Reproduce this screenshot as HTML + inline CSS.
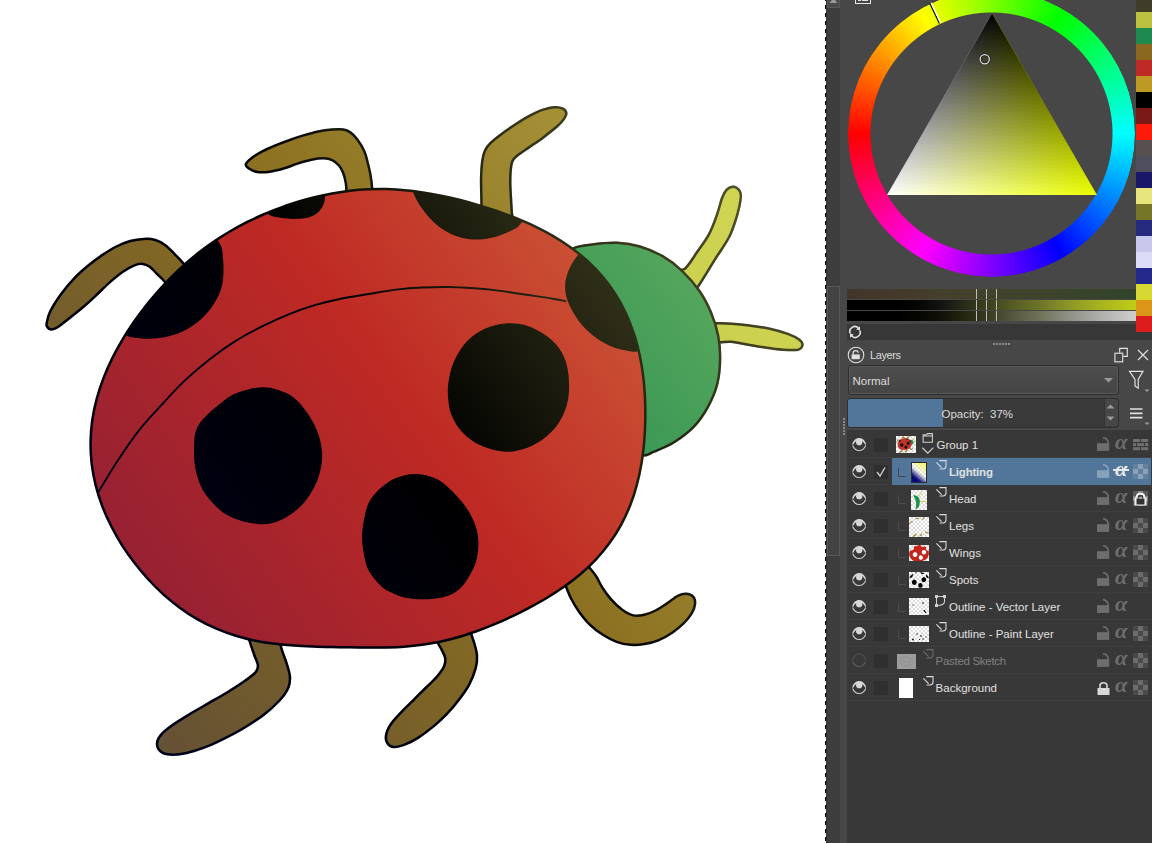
<!DOCTYPE html>
<html><head><meta charset="utf-8"><title>Krita</title>
<style>
*{box-sizing:border-box;margin:0;padding:0}
html,body{width:1152px;height:843px;overflow:hidden;background:#474747;font-family:"Liberation Sans",sans-serif;font-size:11.5px;color:#dcdcdc}
.abs{position:absolute}
#canvas{position:absolute;left:0;top:0;width:825px;height:843px;background:#fff;overflow:hidden}
#ants{position:absolute;left:825px;top:0;width:1.2px;height:843px;background:repeating-linear-gradient(180deg,#000 0,#000 1.5px,#fff 1.5px,#fff 5px,#000 5px,#000 8px)}
#sbar{position:absolute;left:826px;top:0;width:14px;height:843px;background:#3d3d3d;border-left:1px solid #383838}
#sbtn{position:absolute;left:827px;top:-6px;width:13px;height:14px;background:#4a4a4a;border:1px solid #595959}
#shandle{position:absolute;left:827px;top:286px;width:13px;height:270px;background:#434343;border:1px solid #585858}
#layers{position:absolute;left:847px;top:430px;width:305px;height:413px;background:#383838}
.row{position:absolute;left:0;width:305px;height:27px;border-bottom:1px solid #3e3e3e}
.row .t{position:absolute;top:7px;white-space:nowrap;line-height:14px}
.chk{position:absolute;left:27px;top:7px;width:14px;height:14px;background:#2f2f2f}
.sel{position:absolute;left:45px;top:0;width:259px;height:27px;background:#51769a}
.thumb{position:absolute;overflow:hidden}
.al{width:16px;height:18px;font:italic bold 21px/18px 'Liberation Serif',serif;transform:scaleX(1.08);transform-origin:0 0}
.cb{background-color:#fff;background-image:linear-gradient(45deg,#ddd 25%,transparent 25%,transparent 75%,#ddd 75%),linear-gradient(45deg,#ddd 25%,transparent 25%,transparent 75%,#ddd 75%);background-size:4px 4px;background-position:0 0,2px 2px}
</style></head>
<body>
<div id="canvas">
<svg id="bug" width="825" height="843" viewBox="0 0 825 843">
<defs>
<path id="body" d="M92.3,420.0C93.4,412.8 94.9,405.6 96.8,398.7C98.6,391.7 100.9,384.8 103.5,378.1C106.1,371.4 109.0,364.9 112.1,358.6C115.2,352.2 118.7,346.1 122.2,340.1C125.7,334.2 129.5,328.4 133.3,322.8C137.2,317.2 141.2,311.8 145.3,306.5C149.4,301.3 153.6,296.2 158.0,291.3C162.3,286.4 166.7,281.6 171.3,277.1C175.8,272.5 180.5,268.1 185.2,263.9C190.0,259.7 194.9,255.7 199.8,251.8C204.8,248.0 209.8,244.3 215.0,240.8C220.1,237.4 225.4,234.1 230.7,231.0C236.0,227.9 241.4,225.0 246.8,222.2C252.2,219.5 257.8,216.9 263.3,214.5C268.8,212.1 274.5,209.9 280.1,207.8C285.7,205.7 291.4,203.8 297.2,202.0C302.9,200.2 308.7,198.6 314.5,197.2C320.3,195.8 326.2,194.5 332.1,193.4C338.0,192.4 344.0,191.5 350.0,190.8C355.9,190.1 362.0,189.6 368.0,189.3C374.0,189.1 380.1,189.0 386.2,189.1C392.2,189.3 398.3,189.6 404.4,190.2C410.5,190.7 416.6,191.5 422.6,192.4C428.7,193.3 434.8,194.4 440.9,195.7C447.0,196.9 453.1,198.3 459.2,199.8C465.3,201.4 471.4,203.1 477.6,204.9C483.8,206.7 490.0,208.7 496.2,210.8C502.4,213.0 508.7,215.2 514.9,217.7C521.2,220.3 527.5,222.9 533.8,225.9C540.0,228.9 546.3,232.1 552.4,235.6C558.5,239.2 564.5,243.0 570.4,247.2C576.2,251.4 581.9,255.9 587.2,260.7C592.5,265.6 597.7,270.9 602.3,276.4C607.0,281.9 611.4,287.8 615.3,294.0C619.3,300.1 622.8,306.6 625.9,313.2C629.0,319.8 631.6,326.7 633.9,333.6C636.2,340.5 638.0,347.7 639.6,354.8C641.1,361.9 642.3,369.2 643.2,376.4C644.1,383.7 644.6,390.9 645.0,398.2C645.3,405.5 645.4,412.7 645.3,420.0C645.2,427.3 644.8,434.5 644.2,441.7C643.6,449.0 642.7,456.2 641.5,463.3C640.3,470.5 638.8,477.6 636.9,484.6C635.1,491.5 632.9,498.5 630.2,505.2C627.6,511.9 624.5,518.5 621.1,524.8C617.6,531.1 613.8,537.3 609.5,543.1C605.3,548.9 600.7,554.4 595.8,559.6C590.9,564.8 585.7,569.7 580.3,574.3C575.0,578.8 569.3,583.1 563.6,587.1C557.9,591.1 552.1,594.8 546.3,598.3C540.4,601.8 534.5,605.0 528.6,608.1C522.8,611.2 516.9,614.1 511.0,616.8C505.1,619.6 499.3,622.2 493.4,624.6C487.5,627.1 481.6,629.4 475.7,631.5C469.8,633.5 463.9,635.5 458.0,637.2C452.0,638.9 446.0,640.4 440.0,641.7C434.0,642.9 428.0,644.0 422.0,644.8C415.9,645.6 409.9,646.2 403.9,646.7C397.9,647.1 391.9,647.3 385.9,647.5C379.9,647.6 374.0,647.6 368.0,647.6C362.0,647.5 356.1,647.4 350.1,647.3C344.1,647.2 338.1,647.1 332.1,646.9C326.0,646.8 319.9,646.7 313.6,646.4C307.4,646.2 301.1,646.0 294.7,645.5C288.3,645.1 281.8,644.6 275.3,643.8C268.8,643.0 262.1,642.0 255.5,640.7C249.0,639.4 242.3,637.8 235.8,635.8C229.2,633.8 222.7,631.4 216.4,628.7C210.0,626.0 203.7,622.9 197.7,619.4C191.6,615.9 185.7,612.1 180.1,607.9C174.4,603.8 168.9,599.3 163.6,594.6C158.3,589.8 153.3,584.8 148.4,579.5C143.6,574.3 139.0,568.8 134.6,563.1C130.2,557.3 126.0,551.4 122.1,545.3C118.2,539.2 114.6,532.8 111.3,526.3C108.0,519.8 104.9,513.1 102.3,506.3C99.8,499.5 97.5,492.5 95.7,485.4C94.0,478.3 92.6,471.0 91.7,463.8C90.9,456.5 90.5,449.1 90.6,441.8C90.7,434.5 91.3,427.2 92.3,420.0Z"/>
<path id="head" d="M560.0,262.0C555.5,250.1 567.1,251.5 572.8,248.5C578.5,245.5 586.8,245.1 594.2,244.2C601.6,243.2 609.4,242.4 617.0,242.8C624.6,243.2 632.2,244.3 639.8,246.5C647.4,248.7 655.5,252.1 662.6,256.2C669.7,260.3 676.3,265.4 682.5,271.3C688.7,277.2 694.9,284.4 699.6,291.3C704.4,298.2 707.9,305.2 711.0,312.6C714.1,320.0 716.6,327.8 718.1,335.4C719.6,343.0 720.2,350.1 720.1,358.2C720.0,366.3 719.3,375.7 717.3,383.8C715.3,391.9 712.0,399.5 708.1,406.6C704.2,413.7 699.6,420.7 693.9,426.6C688.2,432.6 680.6,438.1 674.0,442.3C667.4,446.5 659.3,449.5 654.0,451.7C648.7,453.9 646.9,455.9 642.1,455.6C637.3,455.3 630.4,459.3 625.0,450.0C619.6,440.7 614.2,421.7 610.0,400.0C605.8,378.3 608.3,343.0 600.0,320.0C591.7,297.0 564.5,273.9 560.0,262.0Z"/>
<path id="ant1" d="M675.0,272.0C674.2,267.4 681.4,272.0 685.1,268.6C688.9,265.2 693.5,257.2 697.5,251.6C701.5,245.9 705.6,240.7 708.8,234.7C712.0,228.7 714.5,221.8 716.7,215.6C719.0,209.4 720.6,201.8 722.3,197.5C724.0,193.2 725.0,191.5 726.8,189.7C728.6,187.9 731.1,186.6 733.2,186.7C735.3,186.8 737.9,188.5 739.2,190.3C740.5,192.1 741.2,193.3 740.8,197.5C740.4,201.7 739.0,209.0 737.0,215.6C735.0,222.2 732.7,229.9 729.1,237.0C725.5,244.1 720.7,250.3 715.6,258.4C710.5,266.5 703.0,279.2 698.7,285.5C694.4,291.8 694.0,298.2 690.0,296.0C686.0,293.8 675.8,276.6 675.0,272.0Z"/>
<path id="ant2" d="M705.0,323.0C707.0,319.7 712.3,323.2 716.7,323.3C721.1,323.4 726.0,323.4 731.4,323.8C736.8,324.2 743.0,324.8 749.4,325.6C755.8,326.4 763.3,327.3 769.7,328.7C776.1,330.1 782.8,332.1 787.7,333.9C792.6,335.7 796.5,337.7 799.0,339.6C801.5,341.5 802.6,343.5 802.4,345.2C802.2,346.9 801.1,348.9 797.9,349.7C794.7,350.4 788.7,350.1 783.2,349.7C777.8,349.3 771.2,348.4 765.2,347.5C759.2,346.6 752.7,345.4 747.1,344.5C741.5,343.6 735.9,342.2 731.4,341.8C726.9,341.4 724.5,342.1 720.1,342.3C715.7,342.5 707.5,346.2 705.0,343.0C702.5,339.8 703.0,326.3 705.0,323.0Z"/>
<path id="leg1" d="M46.9,322.2C47.5,319.6 48.1,315.6 50.4,311.0C52.7,306.4 56.8,299.9 60.8,294.4C64.8,288.9 70.1,282.6 74.7,277.8C79.3,273.0 84.0,269.1 88.6,265.3C93.2,261.5 97.9,258.0 102.5,254.9C107.1,251.8 111.8,248.8 116.4,246.5C121.0,244.2 125.7,242.3 130.3,241.0C134.9,239.7 140.0,239.1 144.2,238.9C148.4,238.7 151.8,239.0 155.3,240.0C158.8,241.0 161.5,242.5 165.0,245.1C168.5,247.7 172.9,252.3 176.1,255.6C179.3,258.9 180.4,260.0 184.4,264.6C188.4,269.2 200.7,277.1 200.0,283.0C199.3,288.9 185.8,300.2 180.0,300.0C174.2,299.8 168.9,286.4 165.0,282.0C161.1,277.6 159.2,276.2 156.7,273.6C154.1,271.1 152.0,268.3 149.7,266.7C147.4,265.1 145.4,264.1 142.8,263.9C140.2,263.7 137.7,264.0 134.4,265.3C131.2,266.6 127.5,268.6 123.3,271.5C119.1,274.4 114.0,278.6 109.4,282.6C104.8,286.7 100.2,291.5 95.6,295.8C91.0,300.1 86.3,304.4 81.7,308.3C77.1,312.2 71.8,316.3 67.8,319.4C63.8,322.5 60.8,325.3 58.0,327.0C55.2,328.7 53.0,329.5 51.1,329.4C49.2,329.3 47.6,327.6 46.9,326.4C46.2,325.2 46.3,324.8 46.9,322.2Z"/>
<path id="leg2" d="M245.8,164.3C246.3,162.6 248.9,160.2 251.7,158.0C254.5,155.8 258.6,153.3 262.8,151.1C267.0,148.9 272.1,146.8 276.7,144.9C281.3,143.0 286.0,141.3 290.6,139.7C295.2,138.1 299.8,136.5 304.4,135.1C309.0,133.7 313.7,132.3 318.3,131.4C322.9,130.5 328.0,129.9 332.2,129.6C336.4,129.3 340.3,129.1 343.3,129.6C346.3,130.1 348.0,130.8 350.3,132.4C352.6,134.0 354.9,136.2 357.2,139.3C359.5,142.4 362.3,146.8 364.2,151.1C366.1,155.4 367.1,160.4 368.3,165.0C369.5,169.6 370.5,174.7 371.1,178.9C371.8,183.1 371.9,185.7 372.2,190.0C372.5,194.3 377.2,202.5 373.0,205.0C368.8,207.5 351.4,207.3 347.0,205.0C342.6,202.7 346.7,195.1 346.5,191.4C346.3,187.8 346.3,186.1 345.8,183.1C345.3,180.1 344.4,176.2 343.3,173.3C342.2,170.4 341.1,167.9 339.2,165.7C337.3,163.5 334.8,161.3 332.2,160.1C329.6,158.9 327.4,158.4 323.9,158.3C320.4,158.2 315.8,158.8 311.4,159.7C307.0,160.6 302.1,162.1 297.5,163.6C292.9,165.1 288.2,167.2 283.6,168.5C279.0,169.8 274.1,171.1 269.7,171.7C265.3,172.3 260.7,172.4 257.2,171.9C253.7,171.4 250.8,169.8 248.9,168.5C247.0,167.2 245.3,166.1 245.8,164.3Z"/>
<path id="leg3" d="M481.7,225.0C476.6,220.6 481.6,211.1 481.5,203.3C481.4,195.5 481.0,185.2 481.1,178.3C481.2,171.4 481.6,166.3 482.2,161.7C482.8,157.1 483.6,153.7 485.0,150.6C486.4,147.5 487.8,145.7 490.6,142.9C493.4,140.1 497.5,137.0 501.7,133.9C505.9,130.8 511.0,127.2 515.6,124.2C520.2,121.2 524.8,118.2 529.4,115.8C534.0,113.4 539.1,111.0 543.3,109.6C547.5,108.2 551.1,107.4 554.4,107.2C557.6,107.0 560.8,107.6 562.8,108.6C564.8,109.6 566.1,111.4 566.3,113.1C566.5,114.8 565.7,116.4 564.2,118.6C562.7,120.8 560.7,123.2 557.2,126.3C553.7,129.4 547.9,133.9 543.3,137.4C538.7,140.9 533.6,144.2 529.4,147.1C525.2,150.0 521.1,152.5 518.3,154.7C515.5,156.9 514.1,157.8 512.8,160.3C511.5,162.9 511.1,165.8 510.7,170.0C510.3,174.2 510.2,180.2 510.3,185.3C510.4,190.4 510.9,196.2 511.1,200.6C511.3,205.0 511.6,207.1 511.7,212.0C511.8,216.9 517.0,227.8 512.0,230.0C507.0,232.2 486.8,229.4 481.7,225.0Z"/>
<path id="leg4" d="M575.0,550.0C580.2,549.8 582.9,559.7 586.4,564.0C589.9,568.3 593.1,571.8 595.8,575.8C598.5,579.8 600.2,584.4 602.8,588.3C605.3,592.2 607.9,595.8 611.1,599.4C614.3,603.0 618.5,607.1 622.2,609.8C625.9,612.5 629.6,614.6 633.3,615.4C637.0,616.2 640.7,615.5 644.4,614.7C648.1,613.9 651.9,612.4 655.6,610.5C659.3,608.6 663.0,606.0 666.7,603.6C670.4,601.2 674.6,597.5 677.8,595.9C681.0,594.3 683.5,593.7 686.1,593.8C688.7,593.9 691.6,595.0 693.1,596.6C694.6,598.2 695.3,600.8 695.1,603.6C694.9,606.4 693.7,609.9 691.7,613.3C689.7,616.6 686.5,620.5 683.3,623.7C680.0,626.9 676.4,629.9 672.2,632.7C668.0,635.5 662.9,638.5 658.3,640.4C653.7,642.3 649.0,643.4 644.4,644.1C639.8,644.8 635.2,645.2 630.6,644.8C626.0,644.4 621.3,643.5 616.7,641.8C612.1,640.1 607.2,637.6 602.8,634.8C598.4,632.0 594.2,628.9 590.3,625.1C586.4,621.3 582.5,616.4 579.2,611.9C576.0,607.4 573.2,602.8 570.8,598.0C568.4,593.2 567.2,588.9 564.6,583.4C562.0,577.9 553.3,570.6 555.0,565.0C556.7,559.4 569.8,550.2 575.0,550.0Z"/>
<path id="leg5" d="M430.0,625.0C424.8,628.5 434.9,636.7 436.9,641.0C438.9,645.3 440.7,647.7 442.1,650.6C443.5,653.5 445.0,655.9 445.3,658.6C445.6,661.3 445.3,663.7 444.0,666.6C442.7,669.5 440.3,672.7 437.3,676.2C434.3,679.7 430.1,683.5 426.1,687.5C422.1,691.5 417.5,696.0 413.2,700.3C408.9,704.6 404.1,709.1 400.4,713.1C396.7,717.1 393.2,720.6 390.8,724.3C388.4,728.0 386.5,732.3 386.0,735.5C385.5,738.7 386.3,741.6 387.6,743.5C388.9,745.4 391.1,746.9 394.0,747.0C396.9,747.1 401.2,745.8 405.2,744.3C409.2,742.8 413.2,741.0 418.0,737.9C422.8,734.8 429.3,729.9 434.1,725.9C438.9,721.9 442.6,718.4 446.9,713.9C451.2,709.4 456.0,703.6 459.7,698.7C463.4,693.8 466.6,689.4 469.3,684.3C472.0,679.2 474.4,673.0 475.7,668.2C477.0,663.4 477.3,659.7 477.0,655.4C476.7,651.1 475.1,646.2 474.1,642.6C473.1,639.0 472.2,637.6 471.2,633.8C470.2,630.0 474.9,621.5 468.0,620.0C461.1,618.5 435.2,621.5 430.0,625.0Z"/>
<path id="leg6" d="M246.0,628.0C241.5,630.0 248.6,637.7 249.9,642.0C251.2,646.3 252.6,650.1 253.9,654.0C255.2,657.9 257.6,662.1 257.9,665.2C258.2,668.3 257.8,669.7 255.5,672.4C253.2,675.1 248.8,678.1 244.3,681.3C239.8,684.5 234.2,688.1 228.3,691.7C222.4,695.3 215.5,699.2 209.1,702.9C202.7,706.6 196.0,710.4 189.8,714.1C183.7,717.8 177.0,721.8 172.2,725.3C167.4,728.8 163.5,731.8 161.0,734.9C158.5,738.0 157.0,740.9 157.0,743.7C157.0,746.5 158.7,749.9 161.0,751.7C163.3,753.5 166.3,754.4 170.6,754.6C174.9,754.8 180.7,754.3 186.6,753.0C192.5,751.7 199.5,749.4 205.9,746.9C212.3,744.4 218.7,741.3 225.1,738.1C231.5,734.9 237.9,731.6 244.3,727.7C250.7,723.8 257.6,719.4 263.5,714.9C269.4,710.4 275.4,705.0 279.5,700.5C283.6,696.0 286.6,691.7 288.3,687.7C290.0,683.7 290.2,680.4 289.9,676.4C289.6,672.4 287.9,667.6 286.7,663.6C285.5,659.6 283.7,655.3 282.7,652.4C281.7,649.5 281.8,649.7 280.8,646.0C279.9,642.3 282.8,633.0 277.0,630.0C271.2,627.0 250.5,626.0 246.0,628.0Z"/>
<g id="spotsg"><path d="M218.3,241.3C223.0,247.7 222.3,251.1 223.0,258.3C223.7,265.5 223.9,276.6 222.2,284.4C220.5,292.2 217.1,298.9 213.0,305.2C208.9,311.5 203.5,317.4 197.4,322.2C191.3,327.0 183.9,331.2 176.5,333.9C169.1,336.6 159.7,338.0 153.0,338.6C146.3,339.2 140.5,338.4 136.1,337.8C131.7,337.2 131.6,338.2 126.4,335.2C121.2,332.2 106.9,330.9 105.0,320.0C103.1,309.1 106.7,285.0 115.0,270.0C123.3,255.0 141.7,238.3 155.0,230.0C168.3,221.7 184.4,218.1 195.0,220.0C205.6,221.9 213.6,234.9 218.3,241.3Z"/><path d="M268.3,214.3C271.8,216.8 276.6,217.0 280.8,217.8C285.0,218.6 289.1,218.9 293.3,218.9C297.5,218.9 302.1,218.9 305.8,218.1C309.5,217.3 312.8,216.2 315.6,214.3C318.4,212.4 320.9,209.5 322.5,206.7C324.1,203.9 324.8,201.5 325.0,197.6C325.2,193.7 329.8,184.9 324.0,183.0C318.2,181.1 300.7,182.7 290.0,186.0C279.3,189.3 263.6,198.3 260.0,203.0C256.4,207.7 264.8,211.8 268.3,214.3Z"/><path d="M413.0,191.7C414.7,196.8 418.1,203.0 422.2,208.7C426.3,214.4 432.1,221.1 437.8,225.7C443.5,230.3 450.0,233.8 456.1,236.1C462.2,238.4 467.9,239.4 474.4,239.5C480.9,239.6 488.7,238.6 495.2,236.9C501.7,235.2 509.1,231.9 513.5,229.6C517.9,227.3 517.7,227.1 521.3,223.0C524.9,218.9 538.5,211.3 535.0,205.0C531.5,198.7 514.2,190.5 500.0,185.0C485.8,179.5 464.7,173.2 450.0,172.0C435.3,170.8 418.2,174.7 412.0,178.0C405.8,181.3 411.3,186.6 413.0,191.7Z"/><path d="M577.4,255.7C573.4,260.6 570.3,266.1 568.3,271.3C566.2,276.5 565.1,281.8 565.1,287.0C565.1,292.2 566.0,297.0 568.3,302.6C570.6,308.2 574.4,315.2 578.7,320.9C583.0,326.5 588.6,332.1 594.3,336.5C599.9,340.9 606.9,344.6 612.6,347.0C618.3,349.4 624.0,350.2 628.3,350.9C632.6,351.5 633.2,352.4 638.2,350.9C643.2,349.4 655.2,350.5 658.0,342.0C660.8,333.5 660.5,314.0 655.0,300.0C649.5,286.0 635.5,267.7 625.0,258.0C614.5,248.3 599.9,242.4 592.0,242.0C584.1,241.6 581.4,250.8 577.4,255.7Z"/><path d="M448.3,400.0C447.7,394.7 447.4,389.7 448.3,383.5C449.2,377.3 450.5,369.6 453.5,362.6C456.5,355.6 461.3,347.4 466.5,341.7C471.7,336.0 478.3,331.7 484.8,328.7C491.3,325.7 498.8,324.0 505.7,323.5C512.6,323.0 519.5,323.4 526.5,325.6C533.5,327.8 541.5,332.1 547.4,336.5C553.3,340.9 558.2,346.1 561.7,352.2C565.2,358.3 567.2,365.0 568.3,373.0C569.3,381.0 569.5,391.9 568.0,400.0C566.5,408.1 563.3,415.4 559.6,421.6C555.9,427.8 551.2,432.6 545.8,437.0C540.4,441.4 534.0,445.3 527.3,447.8C520.6,450.3 513.4,452.2 505.7,451.8C498.0,451.4 488.2,448.8 481.0,445.6C473.8,442.4 467.4,437.4 462.5,432.4C457.6,427.4 454.1,420.8 451.7,415.4C449.3,410.0 448.9,405.3 448.3,400.0Z"/><path d="M260.0,387.4C266.1,387.2 272.2,387.9 278.3,390.0C284.4,392.1 290.5,394.2 296.5,400.0C302.5,405.8 310.1,416.0 314.4,424.7C318.7,433.4 321.6,443.1 322.1,452.4C322.6,461.6 320.8,471.5 317.4,480.2C314.0,488.9 308.2,498.1 302.0,504.8C295.8,511.5 287.8,517.1 280.4,520.3C272.9,523.5 266.0,524.8 257.3,524.0C248.6,523.2 236.5,520.3 228.0,515.6C219.5,510.9 211.6,502.5 206.4,495.6C201.2,488.7 198.7,481.7 196.6,474.0C194.5,466.3 193.8,457.5 194.1,449.3C194.4,441.1 193.6,432.9 198.7,424.7C203.8,416.5 217.6,405.6 224.8,400.0C232.0,394.4 235.8,393.4 241.7,391.3C247.6,389.2 253.9,387.6 260.0,387.4Z"/><path d="M416.3,474.0C423.5,474.2 431.1,476.0 437.8,479.6C444.5,483.2 450.9,489.9 456.3,495.6C461.7,501.4 466.6,507.4 470.2,514.1C473.8,520.8 476.9,528.0 477.9,535.7C478.9,543.4 478.4,552.6 476.4,560.3C474.3,568.0 469.7,576.2 465.6,581.9C461.5,587.6 457.4,591.5 451.7,594.3C446.0,597.1 439.1,598.3 431.7,598.9C424.2,599.5 414.2,599.3 407.0,598.0C399.8,596.7 393.0,593.4 388.5,591.2C384.0,589.0 383.1,588.1 380.0,585.0C376.9,581.9 372.5,576.8 370.0,572.7C367.5,568.6 366.5,566.5 365.2,560.3C363.9,554.1 361.8,544.4 362.1,535.7C362.4,527.0 364.5,515.1 366.8,507.9C369.1,500.7 371.6,497.4 376.2,492.5C380.8,487.6 388.0,481.7 394.7,478.6C401.4,475.5 409.1,473.8 416.3,474.0Z"/></g>
<g id="legsg"><use href="#leg1"/><use href="#leg2"/><use href="#leg3"/><use href="#leg4"/><use href="#leg5"/><use href="#leg6"/></g>
<clipPath id="cb"><use href="#body"/></clipPath>
<mask id="mall" maskUnits="userSpaceOnUse" x="0" y="0" width="825" height="843"><g fill="#fff" stroke="#fff" stroke-width="2.5"><use href="#body"/><use href="#head"/><use href="#ant1"/><use href="#ant2"/><use href="#leg1"/><use href="#leg2"/><use href="#leg3"/><use href="#leg4"/><use href="#leg5"/><use href="#leg6"/></g></mask>
<linearGradient id="lg" gradientUnits="userSpaceOnUse" x1="-103.7" y1="646.9" x2="723.3" y2="44.5"><stop offset="0" stop-color="#00006b"/><stop offset="0.5426" stop-color="#00006b" stop-opacity="0"/><stop offset="0.5426" stop-color="#ffff81" stop-opacity="0"/><stop offset="1" stop-color="#ffff81"/></linearGradient>
</defs>
<use href="#leg1" fill="#8a6f20" stroke="#000" stroke-width="2.5" stroke-linejoin="round"/>
<use href="#leg2" fill="#8a6f20" stroke="#000" stroke-width="2.5" stroke-linejoin="round"/>
<use href="#leg3" fill="#8a6f20" stroke="#000" stroke-width="2.5" stroke-linejoin="round"/>
<use href="#leg4" fill="#8a6f20" stroke="#000" stroke-width="2.5" stroke-linejoin="round"/>
<use href="#leg5" fill="#8a6f20" stroke="#000" stroke-width="2.5" stroke-linejoin="round"/>
<use href="#leg6" fill="#8a6f20" stroke="#000" stroke-width="2.5" stroke-linejoin="round"/>
<use href="#ant1" fill="#bcc240" stroke="#000" stroke-width="2.5" stroke-linejoin="round"/><use href="#ant2" fill="#bcc240" stroke="#000" stroke-width="2.5" stroke-linejoin="round"/>
<use href="#head" fill="#1f8a50" stroke="#000" stroke-width="2.5" stroke-linejoin="round"/>
<use href="#body" fill="#bf2a24"/>
<g clip-path="url(#cb)"><use href="#spotsg" fill="#000"/><path d="M98.5,491.9C101.6,486.9 110.3,471.9 117.0,461.7C123.7,451.5 130.9,440.6 138.6,430.8C146.3,421.0 155.7,411.3 163.3,403.0C170.9,394.7 176.6,388.3 184.4,380.9C192.2,373.5 201.7,365.4 210.4,358.7C219.1,351.9 227.8,345.8 236.5,340.4C245.2,335.0 253.9,330.5 262.6,326.1C271.3,321.8 280.0,317.8 288.7,314.3C297.4,310.8 306.1,307.8 314.8,305.2C323.5,302.6 332.2,300.5 340.9,298.7C349.6,296.9 357.8,295.8 367.0,294.3C376.2,292.8 386.9,290.7 396.1,289.6C405.3,288.5 413.5,287.9 422.2,287.5C430.9,287.1 439.6,286.9 448.3,287.0C457.0,287.1 465.7,287.7 474.4,288.3C483.1,288.9 491.7,289.8 500.4,290.9C509.1,292.0 517.8,293.5 526.5,294.8C535.2,296.1 546.0,297.6 552.6,298.7C559.2,299.8 563.9,300.9 566.2,301.3" fill="none" stroke="#000" stroke-width="1.9"/></g>
<use href="#body" fill="none" stroke="#000" stroke-width="2.5" stroke-linejoin="round"/>
<g mask="url(#mall)"><rect x="0" y="0" width="825" height="843" fill="url(#lg)" opacity="0.37"/></g>
</svg>
</div>
<div id="ants"></div><div id="sbar"></div><div id="sbtn"><svg class="abs" style="left:1px;top:3px" width="9" height="5" viewBox="0 0 9 5"><path d="M0.5,5L4.5,0L8.5,5Z" fill="#9a9a9a"/></svg></div><div id="shandle"></div>
<div class="abs" style="left:855px;top:-10px;width:16.2px;height:14px;border:1px solid #e6e6e6"></div><div class="abs" style="left:858px;top:0;width:2.5px;height:1px;background:#e6e6e6"></div><div class="abs" style="left:862px;top:0;width:6px;height:1px;background:#e6e6e6"></div>
<div class="abs" style="left:847.8px;top:-10.099999999999994px;width:287.2px;height:287.2px;border-radius:50%;background:conic-gradient(from 270deg,#f00,#ff0,#0f0,#0ff,#00f,#f0f,#f00);-webkit-mask:radial-gradient(circle closest-side,transparent 120.5px,#000 121.5px,#000 143.1px,transparent 144.1px);mask:radial-gradient(circle closest-side,transparent 120.5px,#000 121.5px,#000 143.1px,transparent 144.1px)"></div><div class="abs" style="left:887.0px;top:13.3px;width:210.0px;height:181.8px;clip-path:polygon(50% 0,0 100%,100% 100%);background:linear-gradient(180deg,rgba(0,0,0,1),rgba(0,0,0,0)),conic-gradient(from 140deg at 50% 0%,rgb(235,255,0) 0deg,rgb(235,255,0) 10deg,rgb(237,255,20) 14deg,rgb(238,255,38) 18deg,rgb(239,255,56) 22deg,rgb(241,255,72) 26deg,rgb(242,255,89) 30deg,rgb(243,255,104) 34deg,rgb(244,255,120) 38deg,rgb(246,255,135) 42deg,rgb(247,255,151) 46deg,rgb(248,255,166) 50deg,rgb(249,255,183) 54deg,rgb(251,255,199) 58deg,rgb(252,255,217) 62deg,rgb(253,255,235) 66deg,rgb(255,255,255) 70deg,rgb(255,255,255) 80deg,rgb(255,255,255) 200deg,rgb(235,255,0) 200deg)"></div><svg class="abs" style="left:0;top:0" width="1152" height="300" viewBox="0 0 1152 300">
<path d="M929.8,3.3L939.4,23.6" stroke="#000" stroke-width="1.2"/><path d="M931.2,2.7L940.8,23" stroke="#fff" stroke-width="1.4"/>
<circle cx="984.7" cy="59.2" r="4.6" fill="none" stroke="#222" stroke-width="2.6"/><circle cx="984.7" cy="59.2" r="4.6" fill="none" stroke="#e0e0e0" stroke-width="1.3"/>
</svg>
<div class="abs" style="left:847px;top:289px;width:289px;height:10px;background:linear-gradient(90deg,#43342a 0,#44402a 35%,#3e442a 65%,#31442a 100%)"></div>
<div class="abs" style="left:847px;top:300px;width:289px;height:10px;background:linear-gradient(90deg,#000 0,#000 18%,#060604 25%,#121210 32%,#2a2c1a 41%,#40441e 50%,#585e24 58%,#6e7628 67%,#8a9426 76%,#a4b020 86%,#c0ce16 100%)"></div>
<div class="abs" style="left:847px;top:311px;width:289px;height:10px;background:linear-gradient(90deg,#000 0,#000 18%,#060600 25%,#101008 32%,#24260e 41%,#3e4024 50%,#585a40 58%,#70745a 67%,#92948a 78%,#b0b0ac 88%,#cecece 100%)"></div>
<div class="abs" style="left:976px;top:289px;width:1.3px;height:10px;background:#bcbcbc"></div><div class="abs" style="left:976px;top:300px;width:1.3px;height:10px;background:#bcbcbc"></div><div class="abs" style="left:976px;top:311px;width:1.3px;height:10px;background:#bcbcbc"></div><div class="abs" style="left:986px;top:289px;width:1.3px;height:10px;background:#bcbcbc"></div><div class="abs" style="left:986px;top:300px;width:1.3px;height:10px;background:#bcbcbc"></div><div class="abs" style="left:986px;top:311px;width:1.3px;height:10px;background:#bcbcbc"></div><div class="abs" style="left:996px;top:289px;width:1.3px;height:10px;background:#bcbcbc"></div><div class="abs" style="left:996px;top:300px;width:1.3px;height:10px;background:#bcbcbc"></div><div class="abs" style="left:996px;top:311px;width:1.3px;height:10px;background:#bcbcbc"></div>
<div class="abs" style="left:847px;top:324px;width:305px;height:16px;background:#373737"></div>
<svg class="abs" style="left:848px;top:325px" width="14" height="14" viewBox="0 0 14 14"><path d="M2.2,8.5A5,5 0 0 1 10.5,3.2" fill="none" stroke="#e0e0e0" stroke-width="1.6"/><path d="M11.8,5.5A5,5 0 0 1 3.5,10.8" fill="none" stroke="#e0e0e0" stroke-width="1.6"/><path d="M8.2,4.6L12,1.2V5.6Z" fill="#e0e0e0"/><path d="M5.8,9.4L2,12.8V8.4Z" fill="#e0e0e0"/></svg>
<div class="abs" style="left:993px;top:343px;width:17px;height:2px;background:repeating-linear-gradient(90deg,#8a8a8a 0,#8a8a8a 2px,transparent 2px,transparent 3px)"></div>
<div class="abs" style="left:843px;top:418px;width:2px;height:17px;background:repeating-linear-gradient(180deg,#8a8a8a 0,#8a8a8a 2px,transparent 2px,transparent 3px)"></div>
<svg class="abs" style="left:847px;top:346px" width="18" height="18" viewBox="0 0 18 18"><circle cx="9" cy="9" r="7.8" fill="none" stroke="#e0e0e0" stroke-width="1.1"/><rect x="4.6" y="8.4" width="8.2" height="4.8" fill="#e0e0e0"/><path d="M6.2,8.4V6.8C6.2,4 11.2,4 11.2,6.8" fill="none" stroke="#e0e0e0" stroke-width="1.2"/></svg>
<div class="abs" style="left:870px;top:348px;line-height:14px;font-size:10.9px;letter-spacing:-0.35px">Layers</div>
<svg class="abs" style="left:1114px;top:347px" width="15" height="16" viewBox="0 0 15 16"><path d="M5.7,5.7V1.4H13.3V9.4H9.3" fill="none" stroke="#e6e6e6" stroke-width="1.1"/><rect x="0.9" y="6.2" width="7.8" height="8.6" fill="none" stroke="#e6e6e6" stroke-width="1.1"/></svg>
<svg class="abs" style="left:1137px;top:349px" width="12" height="12" viewBox="0 0 12 12"><path d="M1,1L11,11M11,1L1,11" stroke="#e0e0e0" stroke-width="1.2"/></svg>
<div class="abs" style="left:847.5px;top:365px;width:271px;height:30px;border:1px solid #2e2e2e;border-radius:3px;background:linear-gradient(180deg,#4e4e4e,#454545);box-shadow:inset 0 0 0 1px #585858"><div class="abs" style="left:4px;top:8px;line-height:14px">Normal</div><svg class="abs" style="left:255px;top:12px" width="9" height="5" viewBox="0 0 9 5"><path d="M0,0H9L4.5,4.5Z" fill="#9a9a9a"/></svg></div>
<svg class="abs" style="left:1128px;top:370px" width="24" height="24" viewBox="0 0 24 24"><path d="M1.5,1.3H15L10.2,9.5V18.2L7,16V9.5Z" fill="none" stroke="#e6e6e6" stroke-width="1.15"/><path d="M16.5,19.5H21.5L19,22Z" fill="#9a9a9a"/></svg>
<div class="abs" style="left:847px;top:398px;width:271.5px;height:30px;border:1px solid #2e2e2e;border-radius:3px;background:#3a3a3a;overflow:hidden"><div class="abs" style="left:0;top:0;width:95px;height:29px;background:#51769a"></div><div class="abs" style="left:93.5px;top:7.5px;line-height:14px;white-space:pre">Opacity:  37%</div><div class="abs" style="left:256px;top:0;width:14px;height:27px;background:#474747;border-left:1px solid #333"><svg class="abs" style="left:1px;top:5px" width="9" height="18" viewBox="0 0 9 18"><path d="M0.5,4.5H8.5L4.5,0.5Z M0.5,12.5H8.5L4.5,16.5Z" fill="#9a9a9a"/></svg></div></div>
<svg class="abs" style="left:1130px;top:407px" width="22" height="22" viewBox="0 0 22 22"><path d="M0,2H12.5M0,6.3H12.5M0,10.6H12.5" stroke="#e0e0e0" stroke-width="1.7"/><path d="M14.5,15.5H19.5L17,18Z" fill="#9a9a9a"/></svg>
<div class="abs" style="left:1136px;top:-4px;width:16px"><div style="height:16px;background:#3e3e28"></div><div style="height:16px;background:#bcc240"></div><div style="height:16px;background:#1f8a50"></div><div style="height:16px;background:#8a6820"></div><div style="height:16px;background:#bf2a24"></div><div style="height:16px;background:#be9a24"></div><div style="height:16px;background:#000000"></div><div style="height:16px;background:#7a1a16"></div><div style="height:16px;background:#ff1a0a"></div><div style="height:16px;background:#585050"></div><div style="height:16px;background:#4e4e5c"></div><div style="height:16px;background:#1a1668"></div><div style="height:16px;background:#e6e67c"></div><div style="height:16px;background:#767628"></div><div style="height:16px;background:#262a7e"></div><div style="height:16px;background:#c8c8ee"></div><div style="height:16px;background:#dcdcf8"></div><div style="height:16px;background:#24288a"></div><div style="height:16px;background:#d8d832"></div><div style="height:16px;background:#dc961a"></div><div style="height:16px;background:#dc1c1c"></div></div>
<div id="layers">
<div class="row" style="top:1px"><svg class="abs" style="left:4.800000000000001px;top:6.199999999999999px" width="14.4" height="14.4" viewBox="0 0 14 14"><path d="M0.1,7.5C1.2,3.2 3.8,0.9 7,0.9C10.2,0.9 12.8,3.2 13.9,7.5L12.6,7.4C11.6,4.6 9.6,3.1 7,3.1C4.4,3.1 2.4,4.6 1.4,7.4Z" fill="#d6d6d6"/><path d="M0.6,8.3C2,11.8 4.4,13.2 7,13.2C9.6,13.2 12,11.8 13.4,8.3" fill="none" stroke="#cfcfcf" stroke-width="1.05"/><circle cx="7" cy="5" r="3.05" fill="#d8d8d8"/></svg><div class="chk"></div><div class="thumb cb" style="left:49px;top:5.3px;width:20px;height:17px"><svg width="20" height="17" viewBox="30 100 790 670"><use href="#legsg" fill="#8a6f20" stroke="#8a6f20" stroke-width="14"/><use href="#ant1" fill="#bcc240" stroke="#bcc240" stroke-width="10"/><use href="#ant2" fill="#bcc240" stroke="#bcc240" stroke-width="10"/><use href="#head" fill="#2a9a58"/><use href="#body" fill="#c8322a"/><g clip-path="url(#cb)"><use href="#spotsg" fill="#111"/></g></svg></div><svg class="abs" style="left:75px;top:2px" width="12" height="22" viewBox="0 0 12 22"><path d="M1.1,9.3V1.7H4.6L5.4,0.6H10.4V9.3Z M1.1,2.9H10.4" fill="none" stroke="#d0d0d0" stroke-width="1.05"/><path d="M0.3,14.6L5.8,20.2L11.3,14.6" fill="none" stroke="#d0d0d0" stroke-width="1.2"/></svg><div class="t" style="left:89.5px;color:#e0e0e0;">Group 1</div><svg class="abs" style="left:250px;top:5px" width="14" height="15" viewBox="0 0 14 15"><rect x="0" y="7.2" width="12.2" height="7.7" fill="#6e6e6e"/><path d="M6,1.6C9.5,2 11.3,4.5 11.3,8" fill="none" stroke="#6e6e6e" stroke-width="1.6"/></svg><div class="abs al" style="left:268px;top:2px;color:#6e6e6e">α</div><svg class="abs" style="left:286px;top:8px" width="16" height="12" viewBox="0 0 16 12"><rect x="0" y="0" width="7" height="3" fill="#6e6e6e"/><rect x="8" y="0" width="7.2" height="3" fill="#6e6e6e"/><rect x="0" y="4.1" width="3" height="3" fill="#6e6e6e"/><rect x="4" y="4.1" width="7" height="3" fill="#6e6e6e"/><rect x="12" y="4.1" width="3.2" height="3" fill="#6e6e6e"/><rect x="0" y="8.2" width="7" height="3" fill="#6e6e6e"/><rect x="8" y="8.2" width="7.2" height="3" fill="#6e6e6e"/></svg></div>
<div class="row" style="top:28px"><div class="sel"></div><svg class="abs" style="left:4.800000000000001px;top:6.199999999999999px" width="14.4" height="14.4" viewBox="0 0 14 14"><path d="M0.1,7.5C1.2,3.2 3.8,0.9 7,0.9C10.2,0.9 12.8,3.2 13.9,7.5L12.6,7.4C11.6,4.6 9.6,3.1 7,3.1C4.4,3.1 2.4,4.6 1.4,7.4Z" fill="#d6d6d6"/><path d="M0.6,8.3C2,11.8 4.4,13.2 7,13.2C9.6,13.2 12,11.8 13.4,8.3" fill="none" stroke="#cfcfcf" stroke-width="1.05"/><circle cx="7" cy="5" r="3.05" fill="#d8d8d8"/></svg><div class="chk"><svg width="14" height="14" viewBox="0 0 14 14"><path d="M3,7L6,11L11,2.5" fill="none" stroke="#cfcfcf" stroke-width="1.4"/></svg></div><svg class="abs" style="left:51px;top:10px" width="8" height="9" viewBox="0 0 8 9"><path d="M0.5,0V8.5H8" fill="none" stroke="#46494c" stroke-width="1"/></svg><div class="thumb cb" style="left:64px;top:3.5px;width:16px;height:21.5px;border:1px solid #2a2a30"><div style="width:100%;height:100%;background:linear-gradient(40deg,#0a0a74 22%,rgba(10,10,116,0) 52%,rgba(255,255,110,0) 52%,#f6f66a 92%)"></div></div><svg class="abs" style="left:88.8px;top:2.2px" width="11" height="10" viewBox="0 0 11 10"><path d="M3.4,0.6H10V6C10,8 9,8.9 7,8.9H3.6" fill="none" stroke="#dcdcdc" stroke-width="1.05"/><path d="M0.4,2.4L5.6,7.6" stroke="#dcdcdc" stroke-width="1.15"/></svg><div class="t" style="left:102px;color:#e0e0e0;font-weight:bold;letter-spacing:-0.2px;">Lighting</div><svg class="abs" style="left:250px;top:5px" width="14" height="15" viewBox="0 0 14 15"><rect x="0" y="7.2" width="12.2" height="7.7" fill="#87a1ba"/><path d="M6,1.6C9.5,2 11.3,4.5 11.3,8" fill="none" stroke="#87a1ba" stroke-width="1.6"/></svg><div class="abs al" style="left:268px;top:2px;color:#e6e6e6">α</div><div class="abs" style="left:266px;top:11.2px;width:16.2px;height:1.7px;background:#e6e6e6"></div><svg class="abs" style="left:286px;top:6px" width="15" height="15" viewBox="0 0 15 15"><rect width="15" height="15" fill="#64809a"/><rect x="5" y="0" width="5" height="5" fill="#87a1ba"/><rect x="0" y="5" width="5" height="5" fill="#87a1ba"/><rect x="10" y="5" width="5" height="5" fill="#87a1ba"/><rect x="5" y="10" width="5" height="5" fill="#87a1ba"/></svg></div>
<div class="row" style="top:55px"><svg class="abs" style="left:4.800000000000001px;top:6.199999999999999px" width="14.4" height="14.4" viewBox="0 0 14 14"><path d="M0.1,7.5C1.2,3.2 3.8,0.9 7,0.9C10.2,0.9 12.8,3.2 13.9,7.5L12.6,7.4C11.6,4.6 9.6,3.1 7,3.1C4.4,3.1 2.4,4.6 1.4,7.4Z" fill="#d6d6d6"/><path d="M0.6,8.3C2,11.8 4.4,13.2 7,13.2C9.6,13.2 12,11.8 13.4,8.3" fill="none" stroke="#cfcfcf" stroke-width="1.05"/><circle cx="7" cy="5" r="3.05" fill="#d8d8d8"/></svg><div class="chk"></div><svg class="abs" style="left:51px;top:10px" width="8" height="9" viewBox="0 0 8 9"><path d="M0.5,0V8.5H8" fill="none" stroke="#4c4c4c" stroke-width="1"/></svg><div class="thumb cb" style="left:64px;top:5px;width:16px;height:20px"><svg width="16" height="20" viewBox="0 0 16 20"><path d="M2,5.5C7,4.5 10,9 8.5,14.5C8,16.5 7,18 5.5,19H4.5C6,14 5,9 2,5.5Z" fill="#1f9048"/><path d="M8,6L11,1.5M9.5,11.5H15" stroke="#c8d040" stroke-width="1"/></svg></div><svg class="abs" style="left:88.8px;top:2.2px" width="11" height="10" viewBox="0 0 11 10"><path d="M3.4,0.6H10V6C10,8 9,8.9 7,8.9H3.6" fill="none" stroke="#dcdcdc" stroke-width="1.05"/><path d="M0.4,2.4L5.6,7.6" stroke="#dcdcdc" stroke-width="1.15"/></svg><div class="t" style="left:102px;color:#e0e0e0;">Head</div><svg class="abs" style="left:250px;top:5px" width="14" height="15" viewBox="0 0 14 15"><rect x="0" y="7.2" width="12.2" height="7.7" fill="#6e6e6e"/><path d="M6,1.6C9.5,2 11.3,4.5 11.3,8" fill="none" stroke="#6e6e6e" stroke-width="1.6"/></svg><div class="abs al" style="left:268px;top:2px;color:#6e6e6e">α</div><svg class="abs" style="left:286px;top:6px" width="15" height="15" viewBox="0 0 15 15"><rect width="15" height="15" fill="#5a5a5a"/><rect x="5" y="0" width="5" height="5" fill="#8a8a8a"/><rect x="0" y="5" width="5" height="5" fill="#8a8a8a"/><rect x="10" y="5" width="5" height="5" fill="#8a8a8a"/><rect x="5" y="10" width="5" height="5" fill="#8a8a8a"/></svg><svg class="abs" style="left:286px;top:7px" width="15" height="14" viewBox="0 0 15 14"><path d="M4,6V5C4,1 11,1 11,5V6" fill="none" stroke="#f4f4f4" stroke-width="2.4"/><rect x="1.5" y="5.5" width="12" height="8" fill="#f4f4f4"/><rect x="3.5" y="6.5" width="8" height="6" fill="#333"/><path d="M5.3,6.5V5C5.3,2.6 9.7,2.6 9.7,5V6.5" fill="none" stroke="#333" stroke-width="1.1"/></svg></div>
<div class="row" style="top:82px"><svg class="abs" style="left:4.800000000000001px;top:6.199999999999999px" width="14.4" height="14.4" viewBox="0 0 14 14"><path d="M0.1,7.5C1.2,3.2 3.8,0.9 7,0.9C10.2,0.9 12.8,3.2 13.9,7.5L12.6,7.4C11.6,4.6 9.6,3.1 7,3.1C4.4,3.1 2.4,4.6 1.4,7.4Z" fill="#d6d6d6"/><path d="M0.6,8.3C2,11.8 4.4,13.2 7,13.2C9.6,13.2 12,11.8 13.4,8.3" fill="none" stroke="#cfcfcf" stroke-width="1.05"/><circle cx="7" cy="5" r="3.05" fill="#d8d8d8"/></svg><div class="chk"></div><svg class="abs" style="left:51px;top:10px" width="8" height="9" viewBox="0 0 8 9"><path d="M0.5,0V8.5H8" fill="none" stroke="#4c4c4c" stroke-width="1"/></svg><div class="thumb cb" style="left:62px;top:5px;width:20px;height:20px"><svg width="20" height="20" viewBox="40 100 665 665"><mask id="mlegs" maskUnits="userSpaceOnUse" x="0" y="0" width="825" height="843"><rect x="0" y="0" width="825" height="843" fill="#fff"/><use href="#body" fill="#000" stroke="#000" stroke-width="30"/></mask><g mask="url(#mlegs)"><use href="#legsg" fill="#a07c1c" stroke="#a07c1c" stroke-width="4"/></g></svg></div><svg class="abs" style="left:88.8px;top:2.2px" width="11" height="10" viewBox="0 0 11 10"><path d="M3.4,0.6H10V6C10,8 9,8.9 7,8.9H3.6" fill="none" stroke="#dcdcdc" stroke-width="1.05"/><path d="M0.4,2.4L5.6,7.6" stroke="#dcdcdc" stroke-width="1.15"/></svg><div class="t" style="left:102px;color:#e0e0e0;">Legs</div><svg class="abs" style="left:250px;top:5px" width="14" height="15" viewBox="0 0 14 15"><rect x="0" y="7.2" width="12.2" height="7.7" fill="#6e6e6e"/><path d="M6,1.6C9.5,2 11.3,4.5 11.3,8" fill="none" stroke="#6e6e6e" stroke-width="1.6"/></svg><div class="abs al" style="left:268px;top:2px;color:#6e6e6e">α</div><svg class="abs" style="left:286px;top:6px" width="15" height="15" viewBox="0 0 15 15"><rect width="15" height="15" fill="#4a4a4a"/><rect x="5" y="0" width="5" height="5" fill="#6c6c6c"/><rect x="0" y="5" width="5" height="5" fill="#6c6c6c"/><rect x="10" y="5" width="5" height="5" fill="#6c6c6c"/><rect x="5" y="10" width="5" height="5" fill="#6c6c6c"/></svg></div>
<div class="row" style="top:109px"><svg class="abs" style="left:4.800000000000001px;top:6.199999999999999px" width="14.4" height="14.4" viewBox="0 0 14 14"><path d="M0.1,7.5C1.2,3.2 3.8,0.9 7,0.9C10.2,0.9 12.8,3.2 13.9,7.5L12.6,7.4C11.6,4.6 9.6,3.1 7,3.1C4.4,3.1 2.4,4.6 1.4,7.4Z" fill="#d6d6d6"/><path d="M0.6,8.3C2,11.8 4.4,13.2 7,13.2C9.6,13.2 12,11.8 13.4,8.3" fill="none" stroke="#cfcfcf" stroke-width="1.05"/><circle cx="7" cy="5" r="3.05" fill="#d8d8d8"/></svg><div class="chk"></div><svg class="abs" style="left:51px;top:10px" width="8" height="9" viewBox="0 0 8 9"><path d="M0.5,0V8.5H8" fill="none" stroke="#4c4c4c" stroke-width="1"/></svg><div class="thumb cb" style="left:62px;top:5.5px;width:20px;height:16.5px"><svg width="20" height="16.5" viewBox="88 186 560 464"><use href="#body" fill="#c4241c"/><g clip-path="url(#cb)"><use href="#spotsg" fill="#fff"/></g></svg></div><svg class="abs" style="left:88.8px;top:2.2px" width="11" height="10" viewBox="0 0 11 10"><path d="M3.4,0.6H10V6C10,8 9,8.9 7,8.9H3.6" fill="none" stroke="#dcdcdc" stroke-width="1.05"/><path d="M0.4,2.4L5.6,7.6" stroke="#dcdcdc" stroke-width="1.15"/></svg><div class="t" style="left:102px;color:#e0e0e0;">Wings</div><svg class="abs" style="left:250px;top:5px" width="14" height="15" viewBox="0 0 14 15"><rect x="0" y="7.2" width="12.2" height="7.7" fill="#6e6e6e"/><path d="M6,1.6C9.5,2 11.3,4.5 11.3,8" fill="none" stroke="#6e6e6e" stroke-width="1.6"/></svg><div class="abs al" style="left:268px;top:2px;color:#6e6e6e">α</div><svg class="abs" style="left:286px;top:6px" width="15" height="15" viewBox="0 0 15 15"><rect width="15" height="15" fill="#4a4a4a"/><rect x="5" y="0" width="5" height="5" fill="#6c6c6c"/><rect x="0" y="5" width="5" height="5" fill="#6c6c6c"/><rect x="10" y="5" width="5" height="5" fill="#6c6c6c"/><rect x="5" y="10" width="5" height="5" fill="#6c6c6c"/></svg></div>
<div class="row" style="top:136px"><svg class="abs" style="left:4.800000000000001px;top:6.199999999999999px" width="14.4" height="14.4" viewBox="0 0 14 14"><path d="M0.1,7.5C1.2,3.2 3.8,0.9 7,0.9C10.2,0.9 12.8,3.2 13.9,7.5L12.6,7.4C11.6,4.6 9.6,3.1 7,3.1C4.4,3.1 2.4,4.6 1.4,7.4Z" fill="#d6d6d6"/><path d="M0.6,8.3C2,11.8 4.4,13.2 7,13.2C9.6,13.2 12,11.8 13.4,8.3" fill="none" stroke="#cfcfcf" stroke-width="1.05"/><circle cx="7" cy="5" r="3.05" fill="#d8d8d8"/></svg><div class="chk"></div><svg class="abs" style="left:51px;top:10px" width="8" height="9" viewBox="0 0 8 9"><path d="M0.5,0V8.5H8" fill="none" stroke="#4c4c4c" stroke-width="1"/></svg><div class="thumb cb" style="left:62px;top:6px;width:20px;height:16px"><svg width="20" height="16" viewBox="120 186 525 420"><g clip-path="url(#cb)"><use href="#spotsg" fill="#000"/></g></svg></div><svg class="abs" style="left:88.8px;top:2.2px" width="11" height="10" viewBox="0 0 11 10"><path d="M3.4,0.6H10V6C10,8 9,8.9 7,8.9H3.6" fill="none" stroke="#dcdcdc" stroke-width="1.05"/><path d="M0.4,2.4L5.6,7.6" stroke="#dcdcdc" stroke-width="1.15"/></svg><div class="t" style="left:102px;color:#e0e0e0;">Spots</div><svg class="abs" style="left:250px;top:5px" width="14" height="15" viewBox="0 0 14 15"><rect x="0" y="7.2" width="12.2" height="7.7" fill="#6e6e6e"/><path d="M6,1.6C9.5,2 11.3,4.5 11.3,8" fill="none" stroke="#6e6e6e" stroke-width="1.6"/></svg><div class="abs al" style="left:268px;top:2px;color:#6e6e6e">α</div><svg class="abs" style="left:286px;top:6px" width="15" height="15" viewBox="0 0 15 15"><rect width="15" height="15" fill="#4a4a4a"/><rect x="5" y="0" width="5" height="5" fill="#6c6c6c"/><rect x="0" y="5" width="5" height="5" fill="#6c6c6c"/><rect x="10" y="5" width="5" height="5" fill="#6c6c6c"/><rect x="5" y="10" width="5" height="5" fill="#6c6c6c"/></svg></div>
<div class="row" style="top:163px"><svg class="abs" style="left:4.800000000000001px;top:6.199999999999999px" width="14.4" height="14.4" viewBox="0 0 14 14"><path d="M0.1,7.5C1.2,3.2 3.8,0.9 7,0.9C10.2,0.9 12.8,3.2 13.9,7.5L12.6,7.4C11.6,4.6 9.6,3.1 7,3.1C4.4,3.1 2.4,4.6 1.4,7.4Z" fill="#d6d6d6"/><path d="M0.6,8.3C2,11.8 4.4,13.2 7,13.2C9.6,13.2 12,11.8 13.4,8.3" fill="none" stroke="#cfcfcf" stroke-width="1.05"/><circle cx="7" cy="5" r="3.05" fill="#d8d8d8"/></svg><div class="chk"></div><svg class="abs" style="left:51px;top:10px" width="8" height="9" viewBox="0 0 8 9"><path d="M0.5,0V8.5H8" fill="none" stroke="#4c4c4c" stroke-width="1"/></svg><div class="thumb cb" style="left:62px;top:5px;width:20px;height:17px"><svg width="20" height="17" viewBox="0 0 20 17"><circle cx="14" cy="5" r="0.8" fill="#000"/><circle cx="4" cy="7" r="0.6" fill="#000"/><path d="M15,12L17,15L15.5,13.5Z" stroke="#000" stroke-width="1"/></svg></div><svg class="abs" style="left:88px;top:1.5px" width="12" height="13" viewBox="0 0 12 13"><path d="M1.5,1.5H9.5V6.5C9.5,9.5 7,10.5 1.5,10.5Z" fill="none" stroke="#d0d0d0" stroke-width="1.05"/><rect x="0" y="0" width="3" height="3" fill="#d0d0d0"/><rect x="8" y="0" width="3" height="3" fill="#d0d0d0"/><rect x="0" y="9" width="3" height="3" fill="#d0d0d0"/></svg><div class="t" style="left:102px;color:#e0e0e0;">Outline - Vector Layer</div><svg class="abs" style="left:250px;top:5px" width="14" height="15" viewBox="0 0 14 15"><rect x="0" y="7.2" width="12.2" height="7.7" fill="#6e6e6e"/><path d="M6,1.6C9.5,2 11.3,4.5 11.3,8" fill="none" stroke="#6e6e6e" stroke-width="1.6"/></svg><div class="abs al" style="left:268px;top:2px;color:#6e6e6e">α</div></div>
<div class="row" style="top:190px"><svg class="abs" style="left:4.800000000000001px;top:6.199999999999999px" width="14.4" height="14.4" viewBox="0 0 14 14"><path d="M0.1,7.5C1.2,3.2 3.8,0.9 7,0.9C10.2,0.9 12.8,3.2 13.9,7.5L12.6,7.4C11.6,4.6 9.6,3.1 7,3.1C4.4,3.1 2.4,4.6 1.4,7.4Z" fill="#d6d6d6"/><path d="M0.6,8.3C2,11.8 4.4,13.2 7,13.2C9.6,13.2 12,11.8 13.4,8.3" fill="none" stroke="#cfcfcf" stroke-width="1.05"/><circle cx="7" cy="5" r="3.05" fill="#d8d8d8"/></svg><div class="chk"></div><svg class="abs" style="left:51px;top:10px" width="8" height="9" viewBox="0 0 8 9"><path d="M0.5,0V8.5H8" fill="none" stroke="#4c4c4c" stroke-width="1"/></svg><div class="thumb cb" style="left:62px;top:6px;width:20px;height:16px"><svg width="20" height="16" viewBox="0 0 20 16"><circle cx="8" cy="8" r="0.7" fill="#000"/><circle cx="12" cy="10" r="0.8" fill="#000"/><circle cx="4" cy="13.5" r="0.9" fill="#000"/><circle cx="14" cy="13" r="0.7" fill="#000"/><circle cx="10.5" cy="13.5" r="0.6" fill="#000"/><circle cx="17" cy="11" r="0.6" fill="#000"/></svg></div><svg class="abs" style="left:88.8px;top:2.2px" width="11" height="10" viewBox="0 0 11 10"><path d="M3.4,0.6H10V6C10,8 9,8.9 7,8.9H3.6" fill="none" stroke="#dcdcdc" stroke-width="1.05"/><path d="M0.4,2.4L5.6,7.6" stroke="#dcdcdc" stroke-width="1.15"/></svg><div class="t" style="left:102px;color:#e0e0e0;">Outline - Paint Layer</div><svg class="abs" style="left:250px;top:5px" width="14" height="15" viewBox="0 0 14 15"><rect x="0" y="7.2" width="12.2" height="7.7" fill="#6e6e6e"/><path d="M6,1.6C9.5,2 11.3,4.5 11.3,8" fill="none" stroke="#6e6e6e" stroke-width="1.6"/></svg><div class="abs al" style="left:268px;top:2px;color:#6e6e6e">α</div><svg class="abs" style="left:286px;top:6px" width="15" height="15" viewBox="0 0 15 15"><rect width="15" height="15" fill="#4a4a4a"/><rect x="5" y="0" width="5" height="5" fill="#6c6c6c"/><rect x="0" y="5" width="5" height="5" fill="#6c6c6c"/><rect x="10" y="5" width="5" height="5" fill="#6c6c6c"/><rect x="5" y="10" width="5" height="5" fill="#6c6c6c"/></svg></div>
<div class="row" style="top:217px"><svg class="abs" style="left:4.800000000000001px;top:6.199999999999999px" width="14.4" height="14.4" viewBox="0 0 14 14"><path d="M0.6,7.2C1.6,3 4,1 7,1C10,1 12.4,3 13.4,7.2" fill="none" stroke="#555" stroke-width="1"/><path d="M0.6,8.3C2,11.8 4.4,13.2 7,13.2C9.6,13.2 12,11.8 13.4,8.3" fill="none" stroke="#626262" stroke-width="1.05"/></svg><div class="chk"></div><div class="thumb" style="left:50px;top:7px;width:19px;height:15px;background:#9c9c9c"><svg width="19" height="15" viewBox="0 0 19 15"><ellipse cx="9" cy="7.5" rx="6" ry="4.5" fill="none" stroke="#888" stroke-width="1" stroke-dasharray="1.5 1.2"/><circle cx="7" cy="7" r="1" fill="#8a8a8a"/><circle cx="12" cy="8" r="1" fill="#8a8a8a"/></svg></div><svg class="abs" style="left:75.8px;top:2.2px" width="11" height="10" viewBox="0 0 11 10"><path d="M3.4,0.6H10V6C10,8 9,8.9 7,8.9H3.6" fill="none" stroke="#6a6a6a" stroke-width="1.05"/><path d="M0.4,2.4L5.6,7.6" stroke="#6a6a6a" stroke-width="1.15"/></svg><div class="t" style="left:88.6px;color:#808080;letter-spacing:-0.3px;">Pasted Sketch</div><svg class="abs" style="left:250px;top:5px" width="14" height="15" viewBox="0 0 14 15"><rect x="0" y="7.2" width="12.2" height="7.7" fill="#6e6e6e"/><path d="M6,1.6C9.5,2 11.3,4.5 11.3,8" fill="none" stroke="#6e6e6e" stroke-width="1.6"/></svg><div class="abs al" style="left:268px;top:2px;color:#6e6e6e">α</div><svg class="abs" style="left:286px;top:6px" width="15" height="15" viewBox="0 0 15 15"><rect width="15" height="15" fill="#4a4a4a"/><rect x="5" y="0" width="5" height="5" fill="#6c6c6c"/><rect x="0" y="5" width="5" height="5" fill="#6c6c6c"/><rect x="10" y="5" width="5" height="5" fill="#6c6c6c"/><rect x="5" y="10" width="5" height="5" fill="#6c6c6c"/></svg></div>
<div class="row" style="top:244px"><svg class="abs" style="left:4.800000000000001px;top:6.199999999999999px" width="14.4" height="14.4" viewBox="0 0 14 14"><path d="M0.1,7.5C1.2,3.2 3.8,0.9 7,0.9C10.2,0.9 12.8,3.2 13.9,7.5L12.6,7.4C11.6,4.6 9.6,3.1 7,3.1C4.4,3.1 2.4,4.6 1.4,7.4Z" fill="#d6d6d6"/><path d="M0.6,8.3C2,11.8 4.4,13.2 7,13.2C9.6,13.2 12,11.8 13.4,8.3" fill="none" stroke="#cfcfcf" stroke-width="1.05"/><circle cx="7" cy="5" r="3.05" fill="#d8d8d8"/></svg><div class="chk"></div><div class="thumb" style="left:52px;top:4px;width:14px;height:20px;background:#fff"></div><svg class="abs" style="left:75.8px;top:2.2px" width="11" height="10" viewBox="0 0 11 10"><path d="M3.4,0.6H10V6C10,8 9,8.9 7,8.9H3.6" fill="none" stroke="#dcdcdc" stroke-width="1.05"/><path d="M0.4,2.4L5.6,7.6" stroke="#dcdcdc" stroke-width="1.15"/></svg><div class="t" style="left:88.6px;color:#e0e0e0;">Background</div><svg class="abs" style="left:250px;top:7px" width="14" height="14" viewBox="0 0 14 14"><rect x="0.5" y="7" width="12" height="7" fill="#d8d8d8"/><path d="M3,7V4.5C3,0.8 10,0.8 10,4.5V7" fill="none" stroke="#d8d8d8" stroke-width="1.6"/></svg><div class="abs al" style="left:268px;top:2px;color:#6e6e6e">α</div><svg class="abs" style="left:286px;top:6px" width="15" height="15" viewBox="0 0 15 15"><rect width="15" height="15" fill="#4a4a4a"/><rect x="5" y="0" width="5" height="5" fill="#6c6c6c"/><rect x="0" y="5" width="5" height="5" fill="#6c6c6c"/><rect x="10" y="5" width="5" height="5" fill="#6c6c6c"/><rect x="5" y="10" width="5" height="5" fill="#6c6c6c"/></svg></div>
</div>
</body></html>
